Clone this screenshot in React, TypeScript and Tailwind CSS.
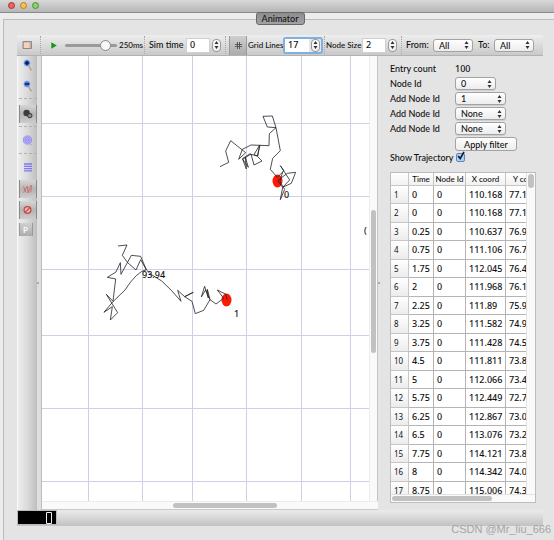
import React from "react";

const rows: [string, string, string, string][] = [
  ["0", "0", "110.168", "77.1"],
  ["0", "0", "110.168", "77.1"],
  ["0.25", "0", "110.637", "76.9"],
  ["0.75", "0", "111.106", "76.7"],
  ["1.75", "0", "112.045", "76.4"],
  ["2", "0", "111.968", "76.1"],
  ["2.25", "0", "111.89", "75.9"],
  ["3.25", "0", "111.582", "74.9"],
  ["3.75", "0", "111.428", "74.5"],
  ["4.5", "0", "111.811", "73.8"],
  ["5", "0", "112.066", "73.4"],
  ["5.75", "0", "112.449", "72.7"],
  ["6.25", "0", "112.867", "73.0"],
  ["6.5", "0", "113.076", "73.2"],
  ["7.75", "0", "114.121", "73.8"],
  ["8", "0", "114.342", "74.0"],
  ["8.75", "0", "115.006", "74.3"],
];

function UpDown() {
  return (
    <svg width="5" height="8" viewBox="0 0 5 8" fill="#333" aria-hidden="true">
      <path d="M2.5 0 4.5 3h-4zM2.5 8 .5 5h4z" />
    </svg>
  );
}

function Popup({ id, value, width }: { id: string; value: string; width: string }) {
  return (
    <span className={`relative inline-flex h-[13px] shrink-0 ${width}`}>
      <select
        id={id}
        defaultValue={value}
        className="w-full appearance-none rounded-[3px] border border-[#a2a2a2] bg-linear-to-b from-white to-[#ececec] pl-[5px] leading-[11px] shadow-[0_1px_0_#cfcfcf]"
      >
        <option>{value}</option>
      </select>
      <span className="pointer-events-none absolute inset-y-0 right-1 flex items-center">
        <UpDown />
      </span>
    </span>
  );
}

function Spin({ id, value, focused }: { id: string; value: string; focused?: boolean }) {
  return (
    <span
      className={
        focused
          ? "flex h-[17px] items-center gap-0.5 rounded-[3px] border-2 border-[#7fb0e0] bg-[#e6e6e6] pr-px"
          : "flex h-[17px] items-center gap-0.5"
      }
    >
      <span className={`flex w-6 items-center bg-white pl-[3px] ${focused ? "h-[13px]" : "h-[15px] border border-[#d0d0d0]"}`}>
        <input
          id={id}
          defaultValue={value}
          className={`bg-transparent font-['Noto_Sans',sans-serif] text-[9px] leading-[12px] outline-none ${focused ? "w-[11px] bg-[#b0d3fb]" : "w-4"}`}
        />
      </span>
      <button
        type="button"
        aria-label="Step"
        className="flex h-[13px] w-[9px] items-center justify-center rounded-[4px] border border-[#999] bg-linear-to-b from-white to-[#eee]"
      >
        <UpDown />
      </button>
    </span>
  );
}

function VSep() {
  return <span className="h-[18px] w-px shrink-0 border-l border-dotted border-[#a8a8a8]" />;
}

function HSep() {
  return <span className="h-px w-[18px] border-t border-dashed border-[#b0b0b0]" />;
}

function Magnifier({ plus }: { plus?: boolean }) {
  return (
    <svg width="10" height="12" viewBox="0 0 10 12" aria-hidden="true">
      <path d="m5.5 6.5 3 4.8" stroke="#b79a9a" strokeWidth="1.4" />
      <circle cx="4" cy="4" r="3.1" fill="#4a7fe0" stroke="#8fb4f4" strokeWidth=".8" />
      <path d={plus ? "M4 1.8v4.4M1.8 4h4.4" : "M1.8 4h4.4"} stroke="#0b1c50" strokeWidth="1.5" />
    </svg>
  );
}

const pressed =
  "flex w-[18px] items-center justify-center border-x border-[#8a8a8a] bg-linear-to-b from-[#d6d6d6] via-[#b4b4b4] to-[#cdcdcd]";

function SideBar() {
  return (
    <nav
      aria-label="View tools"
      className="flex w-5 shrink-0 flex-col items-center border-l border-[#f8f8f8] bg-linear-to-r from-[#ededed] via-[#dadada] to-[#bebebe]"
    >
      <button type="button" aria-label="Zoom in" className="flex h-[18px] items-center">
        <Magnifier plus />
      </button>
      <button type="button" aria-label="Zoom out" className="flex h-6 items-center">
        <Magnifier />
      </button>
      <HSep />
      <button type="button" aria-label="Nodes" className={`mt-[6px] h-[18px] ${pressed}`}>
        <svg width="10" height="10" viewBox="0 0 10 10" aria-hidden="true">
          <circle cx="3.6" cy="4" r="3.2" fill="#3d3d3d" />
          <circle cx="6.8" cy="6.6" r="2.2" fill="#888" stroke="#333" />
        </svg>
      </button>
      <span className="h-[3px]" />
      <HSep />
      <button type="button" aria-label="Wireless circles" className="flex h-[26px] items-center">
        <svg width="10" height="11" viewBox="0 0 10 11" fill="none" stroke="#8d83f0" strokeWidth=".8" aria-hidden="true">
          <circle cx="4.5" cy="5" r="4.1" fill="#bdb6f6" />
          <circle cx="4.5" cy="5" r="2.6" />
          <circle cx="4.5" cy="5" r="1.1" />
          <path d="m7 8.5 1.500 1.500" />
        </svg>
      </button>
      <HSep />
      <button type="button" aria-label="Packet lines" className="flex h-[26px] items-center">
        <svg width="8" height="9" viewBox="0 0 8 9" stroke="#8078f0" strokeWidth="1.3" aria-hidden="true">
          <path d="M0 1h8M0 3.300h8M0 5.600h8M0 7.900h8" />
        </svg>
      </button>
      <button type="button" aria-label="Trajectories" className={`h-[18px] ${pressed}`}>
        <svg width="9" height="10" viewBox="0 0 9 10" fill="none" stroke="#c96a6a" strokeWidth=".9" aria-hidden="true">
          <path d="m.5 2.500 2.500 6M.5 8.500 4.500 2l.5 7L8.300 1 7.800 8.500" />
        </svg>
      </button>
      <button type="button" aria-label="Block" className={`mt-[3px] h-[18px] ${pressed}`}>
        <svg width="9" height="10" viewBox="0 0 9 10" fill="none" stroke="#c44" strokeWidth="1.200" aria-hidden="true">
          <circle cx="4.500" cy="5" r="3.400" fill="#d9bcbc" />
          <path d="m2.200 7.400 4.600-4.800" />
        </svg>
      </button>
      <button
        type="button"
        className="mt-1 mr-1 flex h-[13px] w-[14px] items-center justify-center border-x border-[#999] bg-linear-to-b from-[#d0d0d0] to-[#acacac] text-[8px] font-bold text-white"
      >
        P
      </button>
    </nav>
  );
}

function Canvas() {
  return (
    <div className="flex min-w-0 flex-1 flex-col border-l border-[#bdbdbd] bg-white">
      <div className="flex flex-1">
        <svg className="min-w-0 flex-1 overflow-hidden" role="img" aria-label="Node positions">
          <g stroke="#cfcfe6" strokeWidth="1">
            {[46, 100, 150, 204, 259, 308].map((x) => (
              <line key={x} x1={x + 0.5} x2={x + 0.5} y1="0" y2="100%" />
            ))}
            {[67, 140, 213, 279, 352, 425].map((y) => (
              <line key={y} x1="0" x2="100%" y1={y + 0.5} y2={y + 0.5} />
            ))}
          </g>
          <ellipse cx="184.500" cy="244" rx="5" ry="6.500" fill="#fb1a05" />
          <ellipse cx="235.500" cy="125" rx="5" ry="6.500" fill="#fb1a05" />
          <g fill="none" stroke="#222" strokeWidth="2.400">
            <path
              transform="translate(48 174) scale(.3333)"
              d="M84 48 111 45 97 76 113 98 138 120 152 89 169 119 152 79 124 76 93 133 91 98 78 126 52 142 77 147 69 214 49 193 83 248 61 270 67 230 42 247 69 215 105 180Q140 125 169 119L180 131 215 153 245 182 273 214 263 181 284 200 310 187 284 200 306 214 316 251 341 241 360 209 352 178 355 204 344 169 334 201 347 180 360 209 378 222 401 205 382 180 408 193 411 210"
            />
            <path
              transform="translate(158 44) scale(.3333)"
              d="M60 200 86 187 77 153 92 122 137 158 116 178 127 148 153 135 207 137 208 101 228 83 202 81 189 49 217 48 228 83 241 152 218 175 211 208 232 232 252 212 241 197 269 240 248 262 233 242 262 220 287 217 274 250 248 262 241 299 254 268 240 245 248 215M180 135 172 168 162 164 179 135 173 170 186 183 162 195 153 162 128 178 139 207 136 172 145 202 127 176 149 162 172 168"
            />
          </g>
          <g className="font-['Noto_Sans',sans-serif] text-[9px]" fill="#111">
            <text x="100" y="222">93.94</text>
            <text x="192" y="261">1</text>
            <text x="242" y="142">0</text>
            <text x="322" y="178">(</text>
          </g>
        </svg>
        <div className="w-[9px] border-x border-l-[#ececec] border-r-[#c4c4c4] bg-[#fafafa] px-px pt-[154px]">
          <div className="h-[143px] rounded-full bg-[#c1c1c1]" />
        </div>
      </div>
      <div className="flex h-[9px] items-center border-y border-t-[#ececec] border-b-[#c8c8c8] bg-[#fafafa] pl-[131px]">
        <div className="h-[5px] w-[104px] rounded-full bg-[#c1c1c1]" />
      </div>
    </div>
  );
}

function Field({ id, label, value, width }: { id: string; label: string; value: string; width: string }) {
  return (
    <div className="flex items-center">
      <label htmlFor={id} className="w-[65px] leading-[13px]">
        {label}
      </label>
      <Popup id={id} value={value} width={width} />
    </div>
  );
}

function Panel() {
  return (
    <aside className="flex w-[153px] shrink-0 flex-col pt-1.5">
      <div className="flex leading-[13px]">
        <span className="w-[65px]">Entry count</span>
        <span className="font-['Noto_Sans',sans-serif]">100</span>
      </div>
      <div className="mt-0.5 flex flex-col gap-0.5">
        <Field id="node" label="Node Id" value="0" width="w-[41px]" />
        <Field id="add1" label="Add Node Id" value="1" width="w-[51px]" />
        <Field id="add2" label="Add Node Id" value="None" width="w-[51px]" />
        <Field id="add3" label="Add Node Id" value="None" width="w-[51px]" />
      </div>
      <button
        type="button"
        className="mt-0.5 ml-[65px] h-[14px] w-[62px] rounded-[3px] border border-[#a2a2a2] bg-linear-to-b from-white to-[#ececec] leading-[11px]"
      >
        Apply filter
      </button>
      <div className="flex items-center">
        <label htmlFor="traj" className="w-[66px] whitespace-nowrap leading-[13px]">
          Show Trajectory
        </label>
        <span className="relative flex">
          <input
            id="traj"
            type="checkbox"
            defaultChecked
            className="size-[9px] appearance-none rounded-[2px] border border-[#5f86b5] bg-[#a9d0f5]"
          />
          <svg className="pointer-events-none absolute -top-0.5 left-px" width="8" height="9" viewBox="0 0 8 9" fill="none" stroke="#101830" strokeWidth="1.600" aria-hidden="true">
            <path d="m1.200 5 2 2.600L7 .8" />
          </svg>
        </span>
      </div>
      <div className="mt-2 flex h-[331px] w-[146px] flex-col border border-[#bcbcbc] bg-white">
        <div className="flex min-h-0 flex-1">
          <div className="min-w-0 flex-1 overflow-hidden">
            <table className="w-[157px] table-fixed border-separate border-spacing-0 font-['Noto_Sans',sans-serif]">
              <colgroup>
                <col className="w-[18px]" />
                <col className="w-[25px]" />
                <col className="w-8" />
                <col className="w-10" />
                <col className="w-[42px]" />
              </colgroup>
              <thead>
                <tr className="h-[13px] bg-linear-to-b from-white to-[#f0f0f0] font-['Lato',sans-serif] text-[8px] leading-[12px] whitespace-nowrap">
                  {["", "Time", "Node Id", "X coord", "Y coord"].map((h) => (
                    <th key={h} scope="col" className="border-r border-b border-[#c6c6c6] p-0 text-center font-medium">
                      {h}
                    </th>
                  ))}
                </tr>
              </thead>
              <tbody>
                {rows.map((r, i) => (
                  <tr key={i} className="h-[18px] leading-[16px] even:h-[19px]">
                    <th
                      scope="row"
                      className="border-r border-b border-[#c6c6c6] bg-linear-to-b from-white to-[#ececec] p-0 pl-[3px] text-left text-[8px] font-normal"
                    >
                      {i + 1}
                    </th>
                    {r.map((c, j) => (
                      <td key={j} className="border-r border-b border-[#b4b4b4] p-0 pl-[3px]">
                        {c}
                      </td>
                    ))}
                  </tr>
                ))}
              </tbody>
            </table>
          </div>
          <div className="w-[9px] border-l border-[#e2e2e2] bg-[#fafafa] px-px pt-px">
            <div className="h-[14px] rounded-full bg-[#c1c1c1]" />
          </div>
        </div>
        <div className="flex h-2 items-center border-t border-[#e2e2e2] bg-[#fafafa] pl-px">
          <div className="h-[5px] w-[100px] rounded-full bg-[#c1c1c1]" />
        </div>
      </div>
    </aside>
  );
}

function ToolBar() {
  return (
    <div className="flex h-[21px] items-center border-b border-[#b2b2b2] bg-linear-to-b from-[#eeeeee] to-[#c9c9c9] whitespace-nowrap">
      <button type="button" aria-label="Open" className="flex w-[23px] justify-center pr-1">
        <svg width="10" height="9" viewBox="0 0 10 9" aria-hidden="true">
          <path d="M1 .5h8.500v7H1z" fill="#bdb2aa" stroke="#8b8b8b" />
          <path d="M2 1.500h5.500v5.500H2z" fill="#f4d3bd" />
        </svg>
      </button>
      <VSep />
      <button type="button" aria-label="Play" className="ml-2.5 w-[14px]">
        <svg width="6" height="7" viewBox="0 0 6 7" aria-hidden="true">
          <path d="M.3.2 5.800 3.500.3 6.800z" fill="#159a0d" />
        </svg>
      </button>
      <input
        type="range"
        aria-label="Update rate"
        defaultValue={85}
        className="h-[11px] w-[52px] appearance-none bg-transparent [&::-webkit-slider-runnable-track]:h-[3px] [&::-webkit-slider-runnable-track]:rounded-full [&::-webkit-slider-runnable-track]:bg-[#9a9a9a] [&::-webkit-slider-thumb]:-mt-1 [&::-webkit-slider-thumb]:size-[11px] [&::-webkit-slider-thumb]:appearance-none [&::-webkit-slider-thumb]:rounded-full [&::-webkit-slider-thumb]:border [&::-webkit-slider-thumb]:border-[#888] [&::-webkit-slider-thumb]:bg-[#f8f8f8]"
      />
      <span className="ml-0.5 w-[25px] text-[8px]">250ms</span>
      <VSep />
      <label htmlFor="sim" className="ml-1 w-[37px]">
        Sim time
      </label>
      <Spin id="sim" value="0" />
      <span className="w-1" />
      <VSep />
      <button
        type="button"
        aria-label="Grid"
        className="ml-[3px] flex h-[19px] w-[18px] items-center justify-center border-x border-[#9a9a9a] bg-linear-to-b from-[#cfcfcf] to-[#ababab]"
      >
        <svg width="7" height="7" viewBox="0 0 7 7" stroke="#444" aria-hidden="true">
          <path d="M2.500 0v7M4.500 0v7M0 2.500h7M0 4.500h7" strokeWidth=".8" />
        </svg>
      </button>
      <label htmlFor="grid" className="ml-px w-[35px] text-[8px]">
        Grid Lines
      </label>
      <Spin id="grid" value="17" focused />
      <span className="w-px" />
      <VSep />
      <label htmlFor="size" className="ml-px w-9 text-[8px]">
        Node Size
      </label>
      <Spin id="size" value="2" />
      <span className="w-1" />
      <VSep />
      <label htmlFor="from" className="ml-1 w-[27px]">
        From:
      </label>
      <Popup id="from" value="All" width="w-10" />
      <label htmlFor="to" className="ml-[5px] w-4">
        To:
      </label>
      <Popup id="to" value="All" width="w-10" />
    </div>
  );
}

export default function App() {
  return (
    <main className="relative flex min-h-screen flex-col bg-[#ececec] font-['Lato','Noto_Sans',sans-serif] text-[9px] font-medium text-[#111]">
      <header className="flex h-[13px] items-start gap-[5px] border-b border-[#8a8a8a] bg-linear-to-b from-[#d8d8d8] to-[#b6b6b6] pt-[2px] pl-2">
        <button type="button" aria-label="Close" className="size-[7px] rounded-full border border-[#a33] bg-[#f0635b]" />
        <button type="button" aria-label="Minimize" className="size-[7px] rounded-full border border-[#b97f1d] bg-[#f7bf4f]" />
        <button type="button" aria-label="Zoom" className="size-[7px] rounded-full border border-[#4f8f35] bg-[#8cd070]" />
      </header>
      <section className="mt-1.5 ml-[3px] flex flex-1 flex-col border-t border-l border-[#bcbcbc] bg-[#e4e4e4] pr-[11px] pb-[14px] pl-[13px]">
        <div role="tablist" className="-mt-2 mb-[10px] flex h-[13px] justify-center">
          <button
            type="button"
            role="tab"
            aria-selected="true"
            className="w-[49px] rounded-[3px] border border-[#666] bg-linear-to-b from-[#8d8d8d] to-[#a2a2a2] leading-[11px]"
          >
            Animator
          </button>
        </div>
        <ToolBar />
        <div className="flex flex-1">
          <SideBar />
          <div className="flex w-1 shrink-0 items-center bg-[#dedede]">
            <span className="size-0.5 rounded-full bg-[#999]" />
          </div>
          <Canvas />
          <div className="mr-2 flex w-1 shrink-0 items-center">
            <span className="size-0.5 rounded-full bg-[#999]" />
          </div>
          <Panel />
        </div>
        <footer className="flex h-4 bg-linear-to-b from-[#ebebeb] to-[#c2c2c2]">
          <output className="flex h-[15px] w-10 items-center justify-end border border-[#bbb] bg-black pr-1">
            <svg width="6" height="12" viewBox="0 0 6 12" fill="none" stroke="#eee" aria-label="0" role="img">
              <path d="M.5.5h5v11h-5z" />
            </svg>
          </output>
        </footer>
      </section>
      <span className="absolute right-[3px] bottom-1 font-['Liberation_Sans',sans-serif] text-[11px] leading-[14px] font-normal text-[#a4a4a4]">
        CSDN @Mr_liu_666
      </span>
    </main>
  );
}
